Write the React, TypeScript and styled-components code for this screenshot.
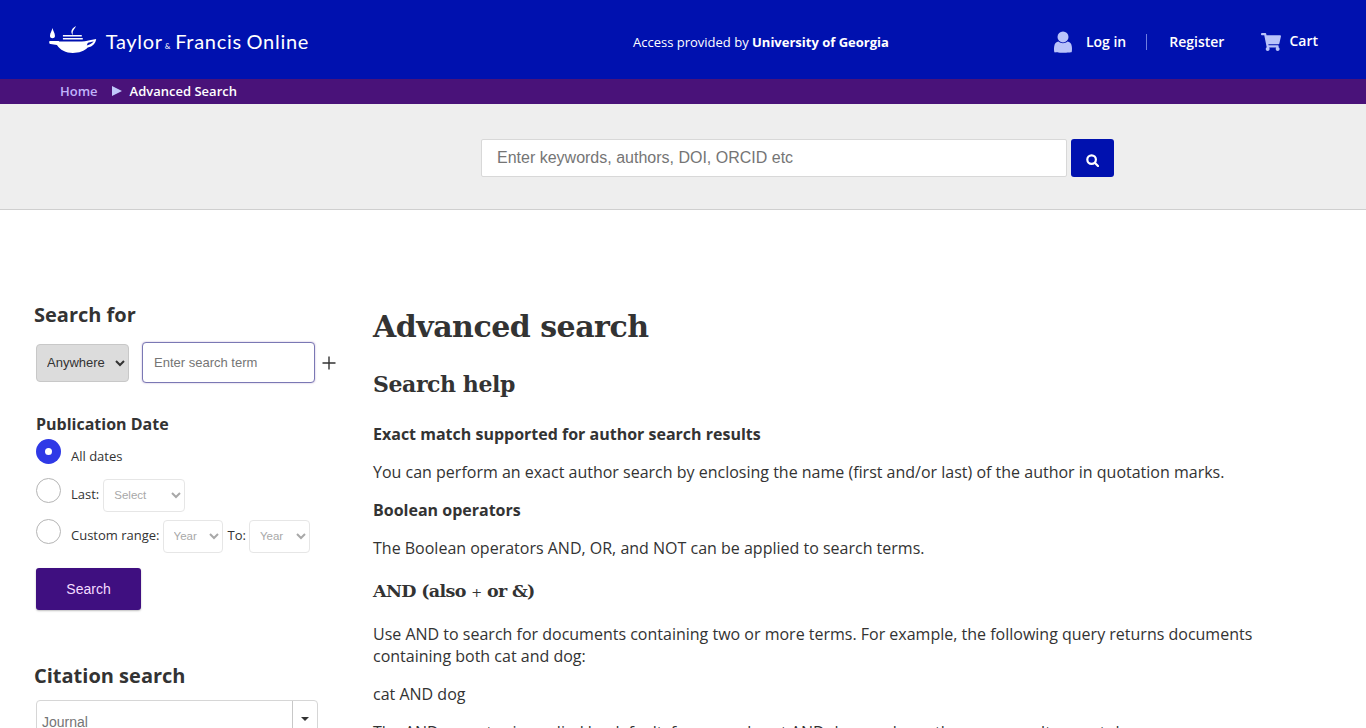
import React from "react";
import styled, { createGlobalStyle } from "styled-components";
import { FaShoppingCart } from "react-icons/fa";

const GlobalStyle = createGlobalStyle`
  html, body {
    margin: 0;
    padding: 0;
    height: 728px;
    overflow: hidden;
    background: #fff;
    font-family: "Open Sans", sans-serif;
    color: #333;
  }
  * { box-sizing: border-box; }
`;

const Header = styled.header`
  height: 79px;
  background: #0011af;
  display: flex;
  align-items: center;
  color: #fff;
  padding: 4px 48px 0 49px;
`;

const LogoLink = styled.a`
  display: flex;
  align-items: center;
  width: 260px;
  height: 30px;
  margin-top: -4px;
  color: #fff;
`;

const LogoText = styled.span`
  font-family: "Lato", sans-serif;
  font-size: 20px;
  line-height: 24px;
  letter-spacing: 0.7px;
  word-spacing: -1px;
  margin: 7px 0 0 9px;
  white-space: nowrap;
  small {
    font-size: 8px;
    margin: 0 4px 0 2px;
  }
`;

const Access = styled.div`
  margin-left: 324px;
  width: 400px;
  font-size: 13px;
  white-space: nowrap;
  b { font-weight: 700; }
`;

const UserNav = styled.nav`
  margin-left: auto;
  display: flex;
  align-items: center;
  font-size: 14px;
  font-weight: 600;
`;

const NavItem = styled.a<{ $gap?: number }>`
  display: flex;
  align-items: center;
  gap: ${(p) => p.$gap ?? 0}px;
  color: #fff;
`;

const NavDivider = styled.span`
  width: 1px;
  height: 16px;
  background: #6f7de0;
  margin: 0 22px 0 20px;
`;

const CartLink = styled(NavItem)`
  margin-left: 37px;
  color: #b9c3fa;
  span { margin-top: -3px; color: #fff; }
`;

const Breadcrumbs = styled.div`
  height: 25px;
  background: #491279;
  display: flex;
  align-items: center;
  padding: 0 0 2px 60px;
  font-size: 13px;
  font-weight: 600;
  color: #fff;
`;

const CrumbLink = styled.a`
  color: #c0b4fb;
`;

const CrumbArrow = styled.span`
  width: 0;
  height: 0;
  margin: 0 8px 0 14px;
  border-left: 10px solid #c0c8fb;
  border-top: 5px solid transparent;
  border-bottom: 5px solid transparent;
`;

const QuickSearch = styled.div`
  height: 106px;
  background: #eeeeee;
  border-bottom: 1px solid #cfcfcf;
  display: flex;
  align-items: flex-start;
  padding: 35px 0 0 481px;
  gap: 4px;
`;

const QuickInput = styled.input`
  width: 586px;
  height: 38px;
  border: 1px solid #d8d8d8;
  border-radius: 2px;
  background: #fff;
  padding: 0 15px;
  font-family: "Liberation Sans", sans-serif;
  font-size: 16px;
  &::placeholder { color: #757575; opacity: 1; }
`;

const QuickButton = styled.button`
  width: 43px;
  height: 38px;
  border: 0;
  border-radius: 3px;
  background: #0011af;
  display: flex;
  align-items: center;
  justify-content: center;
  padding: 4px 0 0;
`;

const Page = styled.main`
  display: grid;
  grid-template-columns: 373px 893px;
  height: 518px;
  overflow: hidden;
`;

const Sidebar = styled.aside`
  padding: 92px 0 0 34px;
`;

const SideTitle = styled.h2`
  margin: 0;
  font-size: 20px;
  line-height: 26px;
  font-weight: 700;
  color: #333;
`;

const SearchRow = styled.div`
  display: flex;
  align-items: center;
  margin: 14px 0 0 2px;
`;

const FieldSelect = styled.select`
  width: 93px;
  height: 38px;
  border: 1px solid #c8c8c8;
  border-radius: 4px;
  background: #dcdcdc;
  color: #333;
  padding: 0 0 0 6px;
  font-family: "Liberation Sans", sans-serif;
  font-size: 13px;
`;

const TermInput = styled.input`
  width: 173px;
  height: 41px;
  margin-left: 13px;
  padding: 0 11px;
  border: 1px solid #7a78b4;
  border-radius: 4px;
  box-shadow: 0 0 2px rgba(73, 18, 121, 0.35);
  background: #fff;
  font-family: "Liberation Sans", sans-serif;
  font-size: 13px;
  &::placeholder { color: #757575; opacity: 1; }
`;

const AddTerm = styled.button`
  border: 0;
  background: none;
  padding: 0;
  margin-left: 7px;
  display: flex;
`;

const DateTitle = styled.h3`
  margin: 30px 0 0 2px;
  font-size: 16px;
  line-height: 22px;
  font-weight: 700;
  color: #333;
`;

const DateRow = styled.label<{ $height: number }>`
  display: flex;
  align-items: center;
  height: ${(p) => p.$height}px;
  margin-left: 2px;
  font-size: 13px;
  color: #333;
`;

const Radio = styled.span<{ $on?: boolean }>`
  flex: none;
  width: 25px;
  height: 25px;
  border-radius: 50%;
  margin: ${(p) => (p.$on ? "-9px" : "-7px")} 10px 0 0;
  background: ${(p) => (p.$on ? "#2f39e6" : "#fff")};
  border: ${(p) => (p.$on ? "0" : "1px solid #b5b5b5")};
  display: flex;
  align-items: center;
  justify-content: center;
  &::after {
    content: "";
    display: ${(p) => (p.$on ? "block" : "none")};
    width: 7px;
    height: 7px;
    border-radius: 50%;
    background: #fff;
  }
`;

const DateSelect = styled.select<{ $width: number; $left?: number }>`
  width: ${(p) => p.$width}px;
  height: 33px;
  margin: 2px 4px 0 ${(p) => p.$left ?? 3}px;
  padding: 0 0 0 6px;
  border: 1px solid #e6e6e6;
  border-radius: 4px;
  background: #fff;
  color: #a8a8a8;
  font-family: "Liberation Sans", sans-serif;
  font-size: 11.5px;
`;

const FromYear = styled(DateSelect)`
  margin-right: 5px;
`;

const SearchButton = styled.button`
  display: block;
  width: 105px;
  height: 42px;
  margin: 9px 0 0 2px;
  border: 0;
  border-radius: 3px;
  background: #3f0f80;
  box-shadow: 0 1px 2px rgba(0, 0, 0, 0.25);
  color: #f3dcff;
  font-family: "Liberation Sans", sans-serif;
  font-size: 14px;
`;

const CitationTitle = styled(SideTitle)`
  margin-top: 53px;
`;

const JournalBox = styled.div`
  display: flex;
  width: 282px;
  height: 40px;
  margin: 11px 0 0 2px;
  border: 1px solid #d6d6d6;
  border-radius: 4px;
  font-family: "Liberation Sans", sans-serif;
  font-size: 14px;
  color: #757575;
`;

const JournalText = styled.div`
  flex: 1;
  padding: 13px 0 0 5px;
`;

const JournalCaret = styled.div`
  width: 25px;
  border-left: 1px solid #c8c8c8;
  display: flex;
  justify-content: center;
  padding-top: 16px;
  &::after {
    content: "";
    width: 0;
    height: 0;
    border-top: 4px solid #333;
    border-left: 4px solid transparent;
    border-right: 4px solid transparent;
  }
`;

const Article = styled.article`
  padding-top: 96px;
  font-size: 16px;
  line-height: 22px;
  color: #333;
  p { margin: 0 0 16px; }
`;

const PageTitle = styled.h1`
  margin: 0;
  font-family: "DejaVu Serif", serif;
  font-size: 30px;
  line-height: 42px;
  letter-spacing: -0.5px;
  font-weight: 700;
`;

const HelpTitle = styled.h2`
  margin: 20px 0 23px;
  font-family: "DejaVu Serif", serif;
  font-size: 22px;
  line-height: 32px;
  letter-spacing: -0.42px;
  font-weight: 700;
`;

const AndTitle = styled.h3`
  margin: 20px 0 18px;
  font-family: "DejaVu Serif", serif;
  font-size: 17.5px;
  line-height: 24px;
  letter-spacing: -0.65px;
  font-weight: 700;
  span { font-size: 13px; font-weight: 400; }
`;

const App: React.FC = () => {
  return (
    <>
      <GlobalStyle />
      <Header>
        <LogoLink>
          <svg width="48" height="27" viewBox="0 0 48 27" fill="#fff">
            <path d="M3.5 2 C4 5 6 7 6 10 C6 13 1 13 1 10 C1 7 3 5 3.5 2 Z" />
            <path d="M27 0 C26.5 3 23 4 24 9 C21.5 6.5 22 3 27 0 Z" />
            <rect x="14" y="9" width="19" height="1.5" />
            <rect x="14" y="12" width="20" height="1.5" />
            <path
              d="M0.5 15 H10 L10 15.5 H33 C37 15.5 42 14 47.5 13 C47 17 44 21 39 21.5 C36 25 30 27 24 27 C17 27 11 24 8 19 L1.5 18 C0 18 0 16 0.5 15 Z M38 19.5 C41 18.5 44 17 45 15.5 C42.5 16 40 16.5 39 17 Z"
              fillRule="evenodd"
            />
          </svg>
          <LogoText>
            Taylor<small>&amp;</small>Francis Online
          </LogoText>
        </LogoLink>
        <Access>
          Access provided by <b>University of Georgia</b>
        </Access>
        <UserNav>
          <NavItem $gap={13}>
            <svg width="20" height="22" viewBox="0 0 20 24" fill="#b9c3fa">
              <circle cx="10" cy="6.5" r="6" />
              <path d="M0.5 23 C0 21 0 17 1 14.5 C2 12.5 4 11.5 5 11.5 C8 14 12 14 15 11.5 C16 11.5 18 12.5 19 14.5 C20 17 20 21 19.5 23 C19 24 1 24 0.5 23 Z" />
            </svg>
            <span>Log in</span>
          </NavItem>
          <NavDivider />
          <NavItem>Register</NavItem>
          <CartLink $gap={8}>
            <FaShoppingCart size={20} />
            <span>Cart</span>
          </CartLink>
        </UserNav>
      </Header>
      <Breadcrumbs>
        <CrumbLink>Home</CrumbLink>
        <CrumbArrow />
        <span>Advanced Search</span>
      </Breadcrumbs>
      <QuickSearch>
        <QuickInput placeholder="Enter keywords, authors, DOI, ORCID etc" />
        <QuickButton aria-label="Search">
          <svg width="13" height="13" viewBox="0 0 13 13" fill="none" stroke="#fff" strokeWidth="2.2">
            <circle cx="5.6" cy="5.6" r="4.3" />
            <path d="M8.8 8.8 L12 12" strokeLinecap="round" />
          </svg>
        </QuickButton>
      </QuickSearch>
      <Page>
        <Sidebar>
          <SideTitle>Search for</SideTitle>
          <SearchRow>
            <FieldSelect defaultValue="Anywhere">
              <option>Anywhere</option>
            </FieldSelect>
            <TermInput placeholder="Enter search term" />
            <AddTerm aria-label="Add term">
              <svg width="14" height="14" viewBox="0 0 14 14" stroke="#333" strokeWidth="1.4">
                <path d="M7 0.5 V13.5 M0.5 7 H13.5" />
              </svg>
            </AddTerm>
          </SearchRow>
          <DateTitle>Publication Date</DateTitle>
          <DateRow $height={42}>
            <Radio $on />
            All dates
          </DateRow>
          <DateRow $height={34}>
            <Radio />
            Last:
            <DateSelect $width={82} $left={4}>
              <option>Select</option>
            </DateSelect>
          </DateRow>
          <DateRow $height={48}>
            <Radio />
            Custom range:
            <FromYear $width={60}>
              <option>Year</option>
            </FromYear>
            To:
            <DateSelect $width={61}>
              <option>Year</option>
            </DateSelect>
          </DateRow>
          <SearchButton>Search</SearchButton>
          <CitationTitle>Citation search</CitationTitle>
          <JournalBox>
            <JournalText>Journal</JournalText>
            <JournalCaret />
          </JournalBox>
        </Sidebar>
        <Article>
          <PageTitle>Advanced search</PageTitle>
          <HelpTitle>Search help</HelpTitle>
          <p><b>Exact match supported for author search results</b></p>
          <p>You can perform an exact author search by enclosing the name (first and/or last) of the author in quotation marks.</p>
          <p><b>Boolean operators</b></p>
          <p>The Boolean operators AND, OR, and NOT can be applied to search terms.</p>
          <AndTitle>AND (also <span>+</span> or &amp;)</AndTitle>
          <p>Use AND to search for documents containing two or more terms. For example, the following query returns documents containing both cat and dog:</p>
          <p>cat AND dog</p>
          <p>The AND operator is applied by default, for example cat AND dog produces the same results as cat dog.</p>
        </Article>
      </Page>
    </>
  );
};

export default App;
